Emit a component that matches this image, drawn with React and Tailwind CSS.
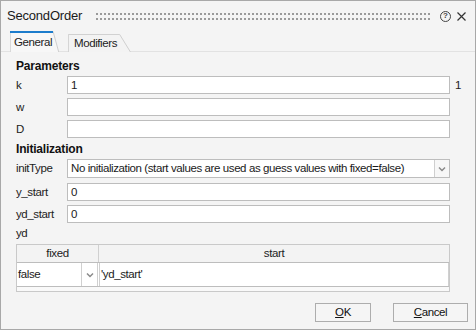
import React from "react";

function Chevron() {
  return (
    <svg width="8" height="6" viewBox="0 0 8 6">
      <path d="M1 1.5 L4 4.5 L7 1.5" fill="none" stroke="#8a8a8a" strokeWidth="1.5" />
    </svg>
  );
}

function Field({ label, value }) {
  return (
    <div className="flex h-[18px] items-center">
      <div className="w-[51px] leading-[18px]">{label}</div>
      <div className="h-[18px] w-[383px] border border-[#bdbdbd] bg-white pl-[3px] leading-[16px] text-[#1a1a1a]">
        {value}
      </div>
    </div>
  );
}

function Tab({ label, active, width }) {
  return (
    <div className={`relative ${active ? "h-[21px] mt-0" : "h-[18px] mt-[3px]"} ${width}`}>
      <svg className="absolute inset-0" width="100%" height="100%" preserveAspectRatio="none" viewBox="0 0 100 20">
        <polyline
          points={active ? "0.5,21 0.5,0.5 88,0.5 100,21" : "0.5,21 0.5,0.5 82,0.5 100,21"}
          fill={active ? "#f7f7f7" : "#f3f3f3"}
          stroke="#cfcfcf"
          strokeWidth="1"
          vectorEffect="non-scaling-stroke"
        />
      </svg>
      {active && <div className="absolute left-0 top-0 h-[2px] w-[88%] bg-[#1c7ccc]" />}
      <div className={`relative ${active ? "pl-[4px] pt-[3px]" : "pl-[6px] pt-[1px]"} leading-[16px]`}>{label}</div>
    </div>
  );
}

export default function App() {
  return (
    <div
      className="flex h-[330px] w-[476px] flex-col border border-[#a8a8a8] bg-[#f4f4f4] text-[11.5px] tracking-[-0.4px] text-[#222]"
      style={{ fontFamily: '"Liberation Sans", Arial, sans-serif' }}
    >
      {/* Title bar */}
      <div className="flex h-[30px] items-center pl-[6px] pr-[9px]">
        <div className="w-[78px] text-[13px] leading-[16px] tracking-[-0.2px] text-[#1a1a1a]">SecondOrder</div>
        <div className="ml-[11px] h-[7px] w-[336px] bg-[radial-gradient(circle_at_1px_1px,#9a9a9a_1px,transparent_1.2px)] bg-[length:4px_5px]" />
        <div className="ml-[8px] flex h-[11px] w-[11px] items-center justify-center rounded-full border border-[#444] text-[8px] font-bold leading-none tracking-normal text-[#444]">
          ?
        </div>
        <svg className="ml-[6px]" width="9" height="9" viewBox="0 0 9 9">
          <path d="M0.5 0.5 L8.5 8.5 M8.5 0.5 L0.5 8.5" stroke="#333" strokeWidth="1.2" />
        </svg>
      </div>

      {/* Tabs */}
      <div className="flex h-[21px] items-start border-b border-[#e2e2e2] pl-[9px]">
        <Tab label="General" active width="w-[49px]" />
        <div className="w-[9px]" />
        <Tab label="Modifiers" width="w-[63px]" />
      </div>

      {/* Content */}
      <div className="flex flex-1 flex-col pl-[15px]">
        <div className="mt-[6px] text-[12px] font-bold leading-[16px] tracking-[-0.2px] text-[#111]">Parameters</div>
        <div className="mt-[2px] flex flex-col gap-[4px]">
          <div className="flex items-center">
            <Field label="k" value="1" />
            <div className="ml-[5px] leading-[18px]">1</div>
          </div>
          <Field label="w" value="" />
          <Field label="D" value="" />
        </div>

        <div className="mt-[3px] text-[12px] font-bold leading-[16px] tracking-[-0.2px] text-[#111]">Initialization</div>
        <div className="mt-[2px] flex h-[19px] items-center">
          <div className="w-[51px] leading-[19px]">initType</div>
          <div className="flex h-[19px] w-[383px] border border-[#bdbdbd] bg-white">
            <div className="flex-1 overflow-hidden whitespace-nowrap pl-[3px] leading-[17px] text-[#1a1a1a]">
              No initialization (start values are used as guess values with fixed=false)
            </div>
            <div className="flex w-[15px] items-center justify-center border-l border-[#cfcfcf] bg-[#f7f7f7]">
              <Chevron />
            </div>
          </div>
        </div>
        <div className="mt-[5px] flex flex-col gap-[4px]">
          <Field label="y_start" value="0" />
          <Field label="yd_start" value="0" />
        </div>

        <div className="mt-[2px] leading-[16px]">yd</div>

        {/* Table */}
        <div className="mt-[3px] flex h-[48px] w-[434px] flex-col border border-[#c9c9c9] bg-[#f9f9f9]">
          <div className="flex h-[17px] bg-[#f3f3f3]">
            <div className="w-[82px] border-r border-[#d0d0d0] text-center leading-[17px]">fixed</div>
            <div className="flex-1 text-center leading-[17px]">start</div>
          </div>
          <div className="flex h-[25px] border-y border-[#bdbdbd] bg-white">
            <div className="flex w-[81px] border-r border-[#d0d0d0]">
              <div className="flex-1 border-r border-[#d0d0d0] pl-[1px] leading-[23px] text-[#1a1a1a]">false</div>
              <div className="flex w-[15px] items-center justify-center">
                <Chevron />
              </div>
            </div>
            <div className="ml-[1px] flex-1 border-x border-[#d0d0d0] pl-[1px] leading-[23px] text-[#1a1a1a]">
              'yd_start'
            </div>
          </div>
        </div>

        {/* Buttons */}
        <div className="mt-[11px] flex justify-end gap-[22px] pr-[7px]">
          <button className="h-[19px] w-[56px] border border-[#adadad] bg-[#f5f5f5] leading-[17px] text-[#111]">
            <span className="underline">O</span>K
          </button>
          <button className="h-[19px] w-[75px] border border-[#adadad] bg-[#f5f5f5] leading-[17px] text-[#111]">
            <span className="underline">C</span>ancel
          </button>
        </div>
      </div>
    </div>
  );
}
